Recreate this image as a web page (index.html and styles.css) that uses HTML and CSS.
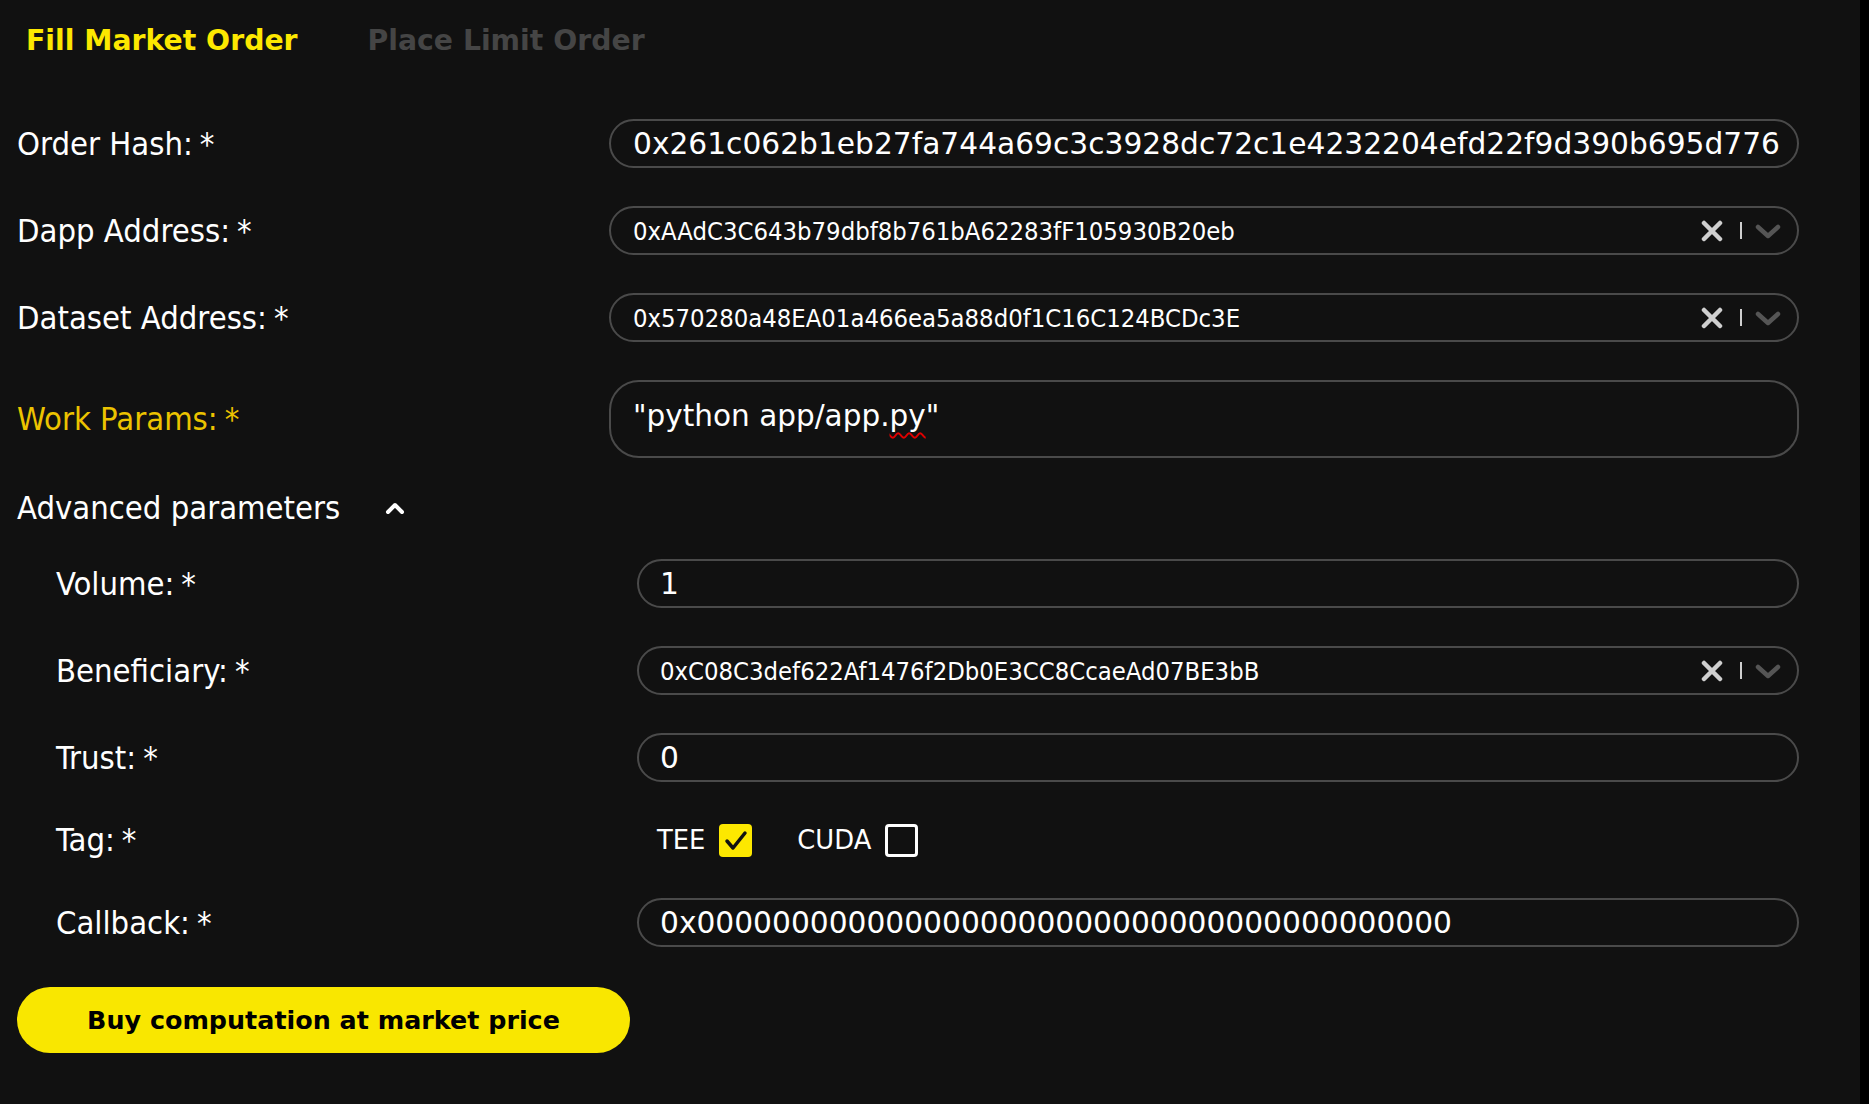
FILE: index.html
```html
<!DOCTYPE html>
<html lang="en">
<head>
<meta charset="utf-8">
<title>Fill Market Order</title>
<link rel="stylesheet" href="styles.css">
</head>
<body>
<div class="page">
  <nav class="tabs">
    <span class="tab tab-active">Fill Market Order</span>
    <span class="tab">Place Limit Order</span>
  </nav>

  <div class="form">
    <div class="row">
      <div class="label">Order Hash:<span class="req">*</span></div>
      <div class="field field-text">0x261c062b1eb27fa744a69c3c3928dc72c1e4232204efd22f9d390b695d776</div>
    </div>

    <div class="row">
      <div class="label">Dapp Address:<span class="req">*</span></div>
      <div class="field field-select">
        <span class="select-value">0xAAdC3C643b79dbf8b761bA62283fF105930B20eb</span>
        <span class="indicators">
          <svg class="ico-clear" width="22" height="22" viewBox="0 0 22 22"><path d="M3 3 L19 19 M19 3 L3 19" stroke="#cfcfcf" stroke-width="4.5" stroke-linecap="round" fill="none"/></svg>
          <span class="sep"></span>
          <svg class="ico-chev" width="26" height="16" viewBox="0 0 26 16"><path d="M3 4 L13 13 L23 4" stroke="#555" stroke-width="4.5" stroke-linecap="round" stroke-linejoin="round" fill="none"/></svg>
        </span>
      </div>
    </div>

    <div class="row">
      <div class="label">Dataset Address:<span class="req">*</span></div>
      <div class="field field-select">
        <span class="select-value">0x570280a48EA01a466ea5a88d0f1C16C124BCDc3E</span>
        <span class="indicators">
          <svg class="ico-clear" width="22" height="22" viewBox="0 0 22 22"><path d="M3 3 L19 19 M19 3 L3 19" stroke="#cfcfcf" stroke-width="4.5" stroke-linecap="round" fill="none"/></svg>
          <span class="sep"></span>
          <svg class="ico-chev" width="26" height="16" viewBox="0 0 26 16"><path d="M3 4 L13 13 L23 4" stroke="#555" stroke-width="4.5" stroke-linecap="round" stroke-linejoin="round" fill="none"/></svg>
        </span>
      </div>
    </div>

    <div class="row row-tall">
      <div class="label label-gold">Work Params:<span class="req">*</span></div>
      <div class="field field-area">"python app/app.<span class="spell">py</span>"</div>
    </div>

    <div class="adv-header">
      <span class="adv-title">Advanced parameters</span>
      <svg class="ico-up" width="20" height="14" viewBox="0 0 20 14"><path d="M3 11 L10 4 L17 11" stroke="#fff" stroke-width="4" stroke-linecap="round" stroke-linejoin="round" fill="none"/></svg>
    </div>

    <div class="adv">
      <div class="row row-adv">
        <div class="label">Volume:<span class="req">*</span></div>
        <div class="field field-text">1</div>
      </div>

      <div class="row row-adv">
        <div class="label">Beneficiary:<span class="req">*</span></div>
        <div class="field field-select">
          <span class="select-value">0xC08C3def622Af1476f2Db0E3CC8CcaeAd07BE3bB</span>
          <span class="indicators">
            <svg class="ico-clear" width="22" height="22" viewBox="0 0 22 22"><path d="M3 3 L19 19 M19 3 L3 19" stroke="#cfcfcf" stroke-width="4.5" stroke-linecap="round" fill="none"/></svg>
            <span class="sep"></span>
            <svg class="ico-chev" width="26" height="16" viewBox="0 0 26 16"><path d="M3 4 L13 13 L23 4" stroke="#555" stroke-width="4.5" stroke-linecap="round" stroke-linejoin="round" fill="none"/></svg>
          </span>
        </div>
      </div>

      <div class="row row-adv">
        <div class="label">Trust:<span class="req">*</span></div>
        <div class="field field-text">0</div>
      </div>

      <div class="row row-adv row-tag">
        <div class="label">Tag:<span class="req">*</span></div>
        <div class="tags">
          <span class="tag">TEE
            <span class="check check-on"><svg width="33" height="33" viewBox="0 0 33 33"><path d="M8 17 L14 24 L26 9" stroke="#111" stroke-width="3.5" stroke-linecap="round" stroke-linejoin="round" fill="none"/></svg></span>
          </span>
          <span class="tag">CUDA
            <span class="check"></span>
          </span>
        </div>
      </div>

      <div class="row row-adv">
        <div class="label">Callback:<span class="req">*</span></div>
        <div class="field field-text">0x0000000000000000000000000000000000000000</div>
      </div>
    </div>

    <div class="actions">
      <button class="btn-buy" type="button">Buy computation at market price</button>
    </div>
  </div>
</div>
</body>
</html>
```

FILE: styles.css
```css
html {
  background: #000;
}

body {
  margin: 0;
  font-family: "DejaVu Sans", "Liberation Sans", sans-serif;
  color: #fff;
}

.page {
  width: 1860px;
  min-height: 1104px;
  background: #111111;
  box-sizing: border-box;
  padding: 0 61px 0 17px;
}

.tabs {
  height: 80px;
  display: flex;
  align-items: center;
  gap: 70px;
  padding-left: 9px;
}

.tab {
  font-size: 28.3px;
  font-weight: bold;
  color: #454545;
}

.tab-active {
  color: #fde800;
}

.form {
  margin-top: 39px;
  display: flex;
  flex-direction: column;
  gap: 38px;
}

.row {
  display: grid;
  grid-template-columns: 592px 1fr;
  align-items: center;
  height: 49px;
}

.row-tall {
  height: 78px;
}

.label {
  font-size: 32.5px;
  font-stretch: condensed;
  color: #fff;
  white-space: nowrap;
}

.label-gold {
  color: #ecc300;
}

.req {
  margin-left: 7px;
}

.field {
  box-sizing: border-box;
  height: 100%;
  border: 2px solid #4a4a4a;
  border-radius: 26px;
  display: flex;
  align-items: center;
  padding: 0 22px;
  overflow: hidden;
  white-space: nowrap;
  color: #fff;
}

.field-text {
  font-size: 29.7px;
}

.row-adv .field {
  padding-left: 21px;
}

.field-select {
  font-size: 25.4px;
  font-stretch: condensed;
  justify-content: space-between;
  padding-right: 16px;
}

.field-area {
  font-size: 29.5px;
  align-items: flex-start;
  padding-top: 17px;
  border-radius: 30px;
}

.spell {
  text-decoration: underline wavy #e00000;
  text-decoration-thickness: 1.5px;
  text-underline-offset: 6px;
}

.indicators {
  display: flex;
  align-items: center;
}

.ico-clear {
  display: block;
}

.sep {
  width: 2px;
  height: 17px;
  background: #cfcfcf;
  margin: 0 13px 0 17px;
}

.ico-chev {
  display: block;
}

.adv-header {
  height: 34px;
  margin: -5px 0 -4px;
  display: flex;
  align-items: center;
}

.adv-title {
  font-size: 32.5px;
  font-stretch: condensed;
}

.ico-up {
  margin-left: 45px;
}

.adv {
  display: flex;
  flex-direction: column;
  gap: 38px;
  padding-left: 39px;
}

.row-adv {
  grid-template-columns: 581px 1fr;
}

.row-tag {
  height: 40px;
}

.tags {
  display: flex;
  align-items: center;
  gap: 45px;
  padding-left: 20px;
}

.tag {
  display: flex;
  align-items: center;
  gap: 14px;
  font-size: 25.8px;
}

.check {
  box-sizing: border-box;
  width: 33px;
  height: 33px;
  border: 3px solid #fff;
  border-radius: 4px;
  display: inline-block;
}

.check-on {
  border: none;
  background: #fde800;
}

.check-on svg {
  display: block;
}

.actions {
  margin-top: 2px;
}

.btn-buy {
  width: 613px;
  height: 66px;
  border: none;
  border-radius: 33px;
  background: #f9e700;
  color: #000;
  font-family: "DejaVu Sans", "Liberation Sans", sans-serif;
  font-size: 25.4px;
  font-weight: bold;
  padding: 0;
  cursor: pointer;
}
```
